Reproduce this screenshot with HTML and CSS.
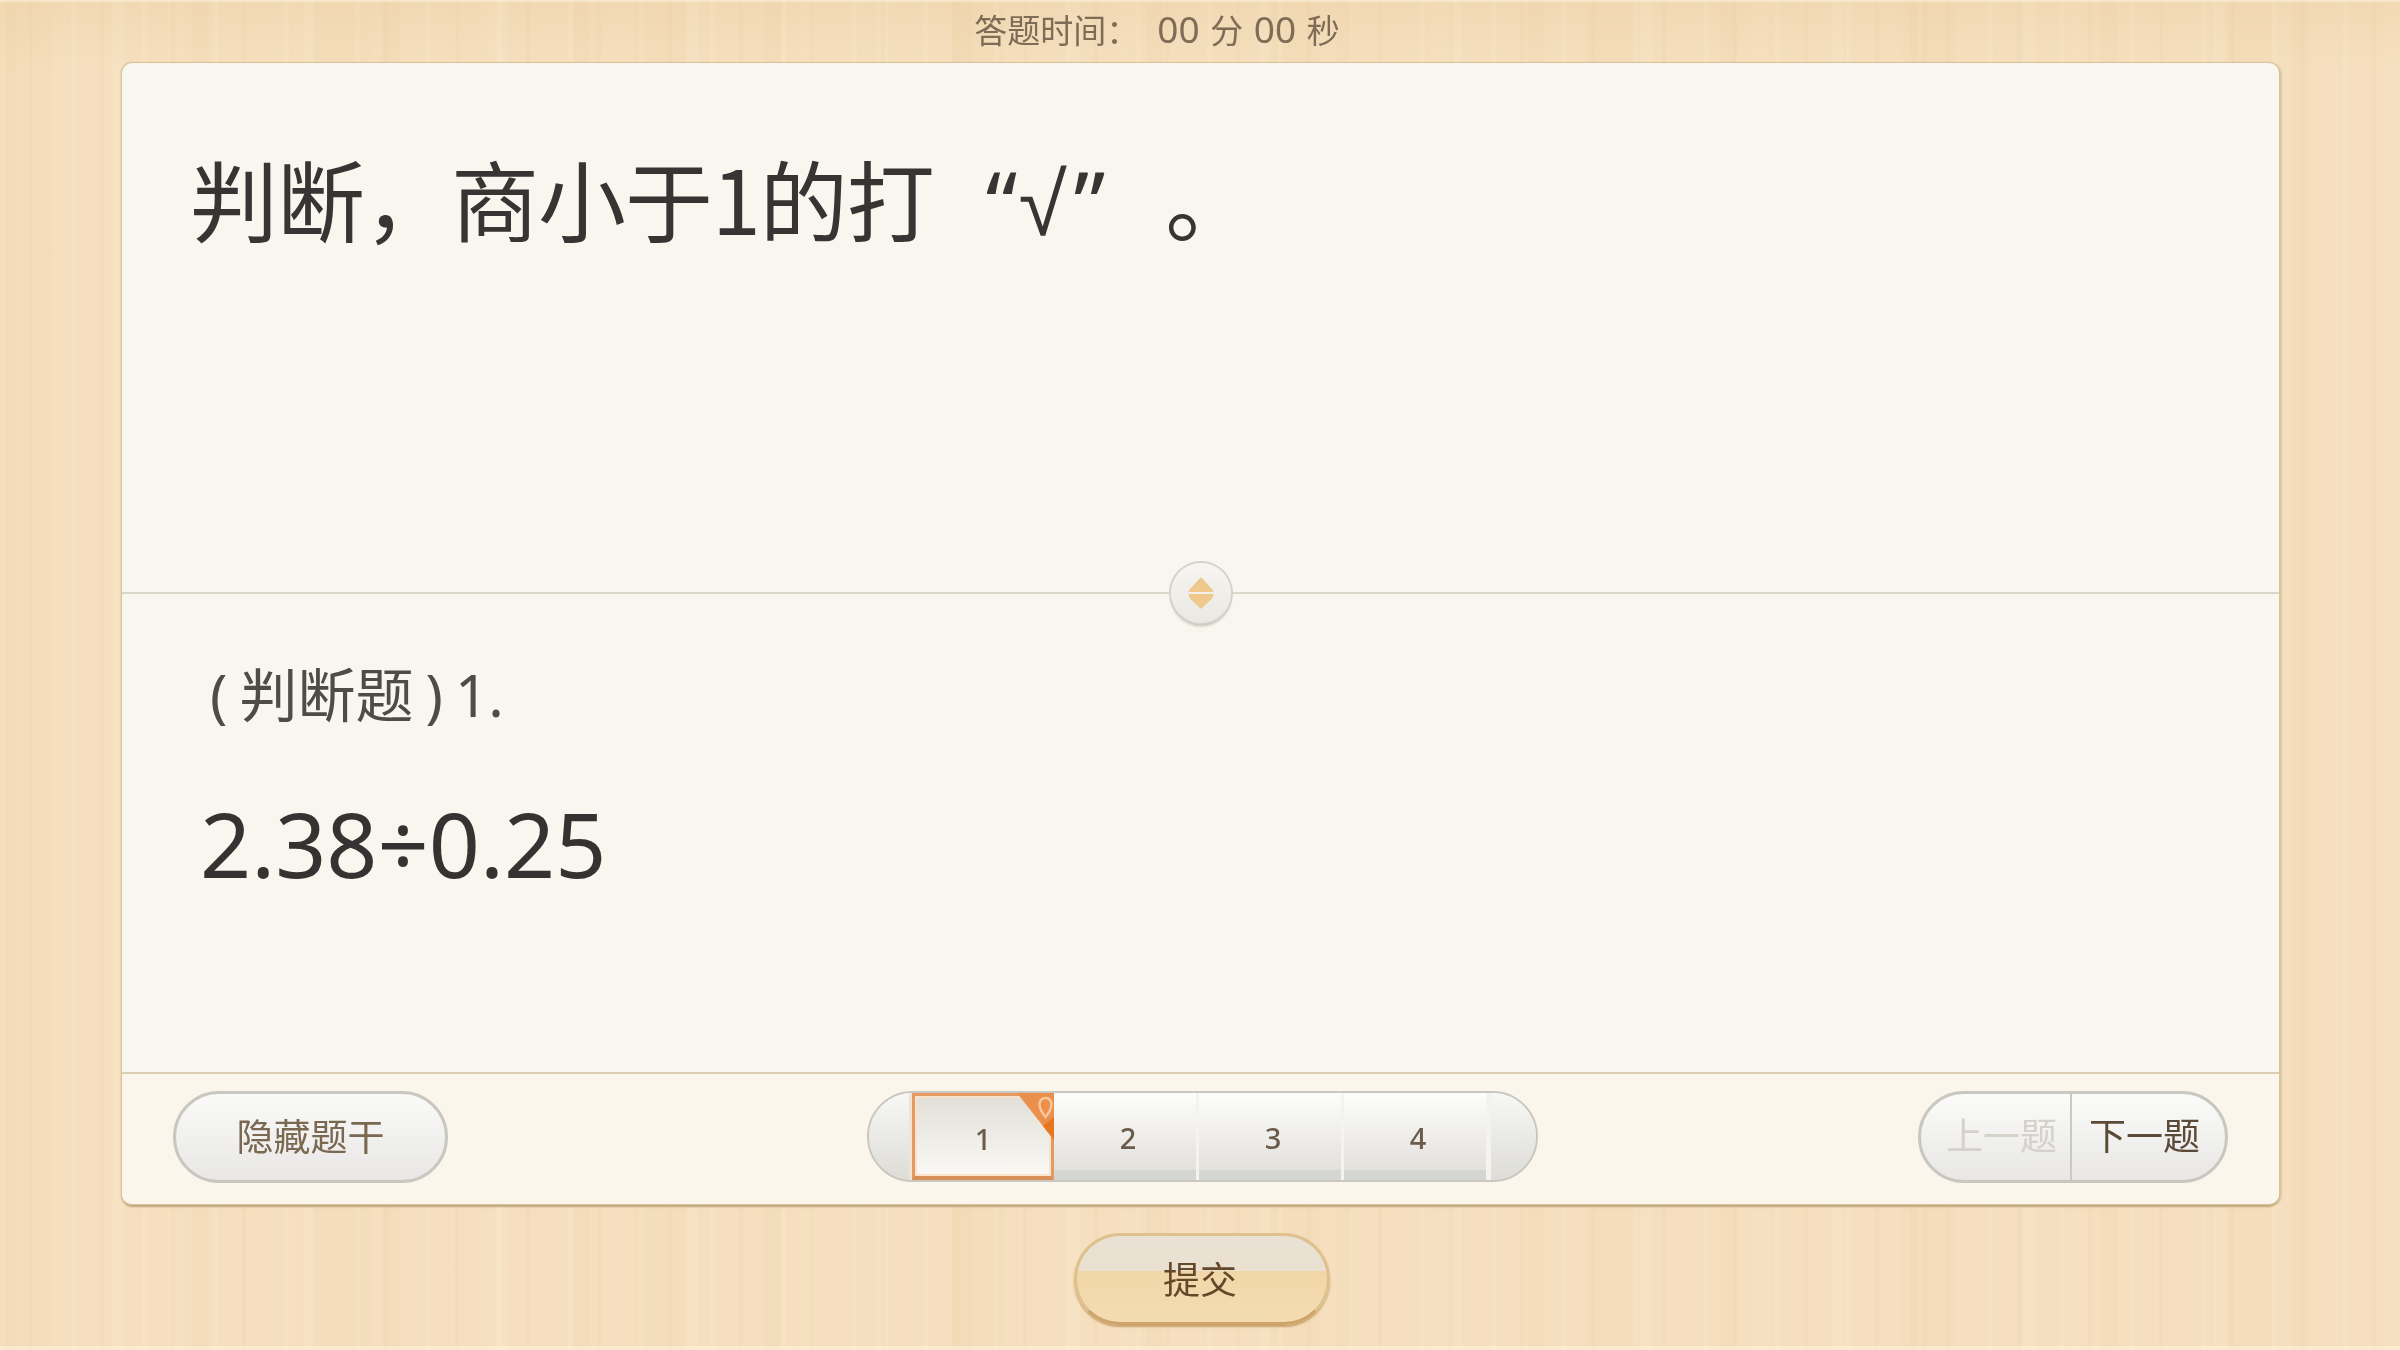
FILE: index.html
```html
<!DOCTYPE html>
<html lang="zh-CN">
<head>
<meta charset="utf-8">
<title>答题</title>
<link rel="stylesheet" href="styles.css">
</head>
<body>
<div class="stage">
  <div class="timer">答题时间：<span class="timer-val"><span class="timer-num">00</span> 分 <span class="timer-num">00</span> 秒</span></div>
  <main class="card">
    <section class="stem">
      <h1 class="stem-text">判断，商小于1的打<span class="quote quote-open">“</span><span class="root">√</span><span class="quote quote-close">”</span>。</h1>
    </section>
    <section class="answer">
      <div class="handle" aria-hidden="true">
        <svg class="handle-icon" viewBox="0 0 28 34"><path class="handle-up" d="M14 1 L25 13 Q26.500 14.500 26.500 16 L1.500 16 Q1.500 14.500 3 13 Z"/><path class="handle-down" d="M1.500 18 L26.500 18 Q26.500 21 24 23.500 L14 33 L4 23.500 Q1.500 21 1.500 18 Z"/></svg>
      </div>
      <p class="q-tag">( 判断题 ) 1.</p>
      <p class="q-eq">2.38÷0.25</p>
    </section>
    <footer class="bar">
      <button class="pill hide-btn">隐藏题干</button>
      <nav class="pager">
        <span class="cap cap-l"></span>
        <span class="page is-current">1
          <svg class="flag" viewBox="0 0 37 47"><path class="flag-bg" d="M0 0 H37 V47 Z"/><path class="flag-tip" d="M26 33 L37 24 V47 Z"/><path class="flag-pin" d="M22.500 11 a6 6 0 0 1 12 0 q0 6 -6 13 q-6 -7 -6 -13 Z"/></svg>
        </span>
        <span class="page">2</span>
        <span class="page">3</span>
        <span class="page">4</span>
        <span class="cap cap-r"></span>
      </nav>
      <div class="pill turn">
        <span class="turn-item is-off">上一题</span>
        <span class="turn-item">下一题</span>
      </div>
    </footer>
  </main>
  <div class="actions">
    <button class="submit"><span class="submit-label">提交</span></button>
  </div>
</div>
</body>
</html>
```
FILE: styles.css
```css
* { box-sizing: border-box; }
html, body { margin: 0; height: 1350px; overflow: hidden; background: #f5dfbd; }
body { font-family: "Noto Sans", "Noto Sans CJK SC", sans-serif; }

.stage {
  width: 2400px;
  height: 1350px;
  display: flex;
  flex-direction: column;
  align-items: center;
  filter: blur(0.7px);
  background-color: #f5dfbe;
  background-image:
    linear-gradient(180deg, rgba(255,245,225,.5) 0 2px, transparent 2px 1346px, rgba(255,245,225,.5) 1346px),
    linear-gradient(180deg, rgba(228,196,146,.24) 0, transparent 70px),
    repeating-linear-gradient(90deg, rgba(255,243,215,.18) 0 5px, transparent 5px 29px, rgba(226,196,150,.12) 29px 33px, transparent 33px 71px),
    repeating-linear-gradient(90deg, rgba(228,198,150,.1) 0 17px, transparent 17px 113px, rgba(255,246,222,.15) 113px 125px, transparent 125px 191px),
    repeating-linear-gradient(90deg, rgba(238,212,166,.16) 0 53px, transparent 53px 167px, rgba(250,232,198,.15) 167px 181px, transparent 181px 317px);
}

.timer {
  height: 63px;
  padding: 9px 86px 0 0;
  font-size: 33px;
  line-height: 40px;
  color: #7f6c56;
  white-space: nowrap;
  word-spacing: 2px;
}
.timer-val { margin-left: 18px; }
.timer-num { font-size: 37px; }

.card {
  width: 2157px;
  height: 1141px;
  margin-left: 1px;
  flex: none;
  display: flex;
  flex-direction: column;
  background: #f9f6ef;
  border-radius: 10px;
  box-shadow: 0 0 0 1px #d9c39c, 0 3px 2px #bfa67e, 2px 1px 3px #cdb58e, -1px 0 2px #d5bd95;
}

.stem { height: 529px; padding: 81px 0 0 68px; }
.stem-text { margin: 0; font-family: "Noto Sans CJK SC", sans-serif; font-size: 88px; line-height: 106px; font-weight: 400; color: #363533; letter-spacing: -1px; white-space: nowrap; }
.quote { font-family: "Noto Sans", sans-serif; }
.quote-open { margin-left: 52px; }
.quote-close { margin-left: 8px; margin-right: 61px; }
.root { margin-left: 2px; font-family: "Liberation Sans", sans-serif; font-size: 88px; line-height: 1; }

.answer {
  position: relative;
  height: 480px;
  padding: 65px 0 0 88px;
  border-top: 2px solid #dbd7cb;
}
.handle {
  position: absolute;
  left: 1049px;
  top: -31px;
  width: 60px;
  height: 60px;
  display: flex;
  align-items: center;
  justify-content: center;
  border-radius: 50%;
  background: linear-gradient(180deg, #f6f5f1, #e9e8e3);
  box-shadow: 0 0 0 2px #d3d1c9, 0 3px 3px #bdbbb2;
}
.handle-icon { width: 28px; height: 34px; }
.handle-up, .handle-down { fill: #eec88c; }

.q-tag { margin: 0; font-size: 58px; line-height: 72px; color: #4f4c48; white-space: pre; word-spacing: -3px; }
.q-eq { margin: 59px 0 0 -10px; font-size: 89.500px; line-height: 106px; color: #343331; }

.bar {
  flex: 1;
  display: flex;
  align-items: flex-start;
  padding: 17px 51px 0 51px;
  background: #fbf6ec;
  border-top: 2px solid #dccdb4;
  border-radius: 0 0 10px 10px;
}

.pill {
  height: 92px;
  border: 3px solid #c9c7c0;
  border-radius: 46px;
  background: linear-gradient(180deg, #fafaf9, #e8e7e5);
  font-family: inherit;
  font-size: 37px;
  color: #7a6851;
}
.hide-btn { width: 275px; padding: 0 0 5px; margin-right: 419px; }

.pager {
  width: 671px;
  height: 91px;
  margin-top: 0;
  display: flex;
  border: 2px solid #c9c7c0;
  border-radius: 46px;
  background: linear-gradient(180deg, #fafaf9, #dfddd8);
  overflow: hidden;
}
.cap { flex: none; background: linear-gradient(180deg, #f7f7f5, #dddcd7); }
.cap-l { width: 43px; box-shadow: inset -3px 0 0 #f3e3d3; }
.cap-r { width: 48px; border-left: 2px solid #f3f2ee; }
.page {
  position: relative;
  flex: none;
  width: 145px;
  display: flex;
  align-items: center;
  justify-content: center;
  padding: 2px 0 0 6px;
  font-size: 29px;
  font-weight: 500;
  color: #6b5b4a;
  background: linear-gradient(180deg, #fdfdfc 0, #e3e1dc 88%, #d3d6d3 88%, #d3d6d3 100%);
  border-right: 3px solid #f4f3ef;
}
.page:last-of-type { border-right: 0; width: 146px; }
.page.is-current {
  width: 142px;
  padding: 4px 0 0;
  border: 3px solid #e49a60;
  border-bottom-width: 4px;
  border-bottom-color: #d88f58;
  background: linear-gradient(180deg, #e2dfd8, #f3f1ec 70%, #fbf9f5);
  box-shadow: inset 0 0 0 2px #fbe3cb;
}
.flag { position: absolute; right: -3px; top: -3px; width: 37px; height: 47px; }
.flag-bg { fill: #ea8f4c; }
.flag-tip { fill: #e8751f; }
.flag-pin { fill: none; stroke: #fac79a; stroke-width: 2.5; }

.turn {
  margin-left: auto;
  width: 310px;
  display: flex;
  overflow: hidden;
  background: linear-gradient(180deg, #fbfbfa, #e8e7e6);
  line-height: 84px;
}
.turn-item { flex: 1; text-align: center; color: #5c4a38; padding-right: 8px; }
.turn-item.is-off { flex: none; width: 151px; color: #d5d1cb; padding: 0 0 0 12px; border-right: 2px solid #cbc9c4; }

.actions { padding: 29px 0 0 4px; }
.submit {
  width: 256px;
  height: 92px;
  padding: 0 4px 2px 0;
  border: 3px solid #dfc08e;
  border-bottom-color: #cda56c;
  border-radius: 46px;
  font-family: inherit;
  font-size: 37px;
  color: #65472a;
  background: linear-gradient(180deg, #e9e2d4 0, #e9e0d0 41%, #f1d6a8 41%, #f4dcb2 100%);
  box-shadow: 0 2px 2px #c8a26b;
}
```
